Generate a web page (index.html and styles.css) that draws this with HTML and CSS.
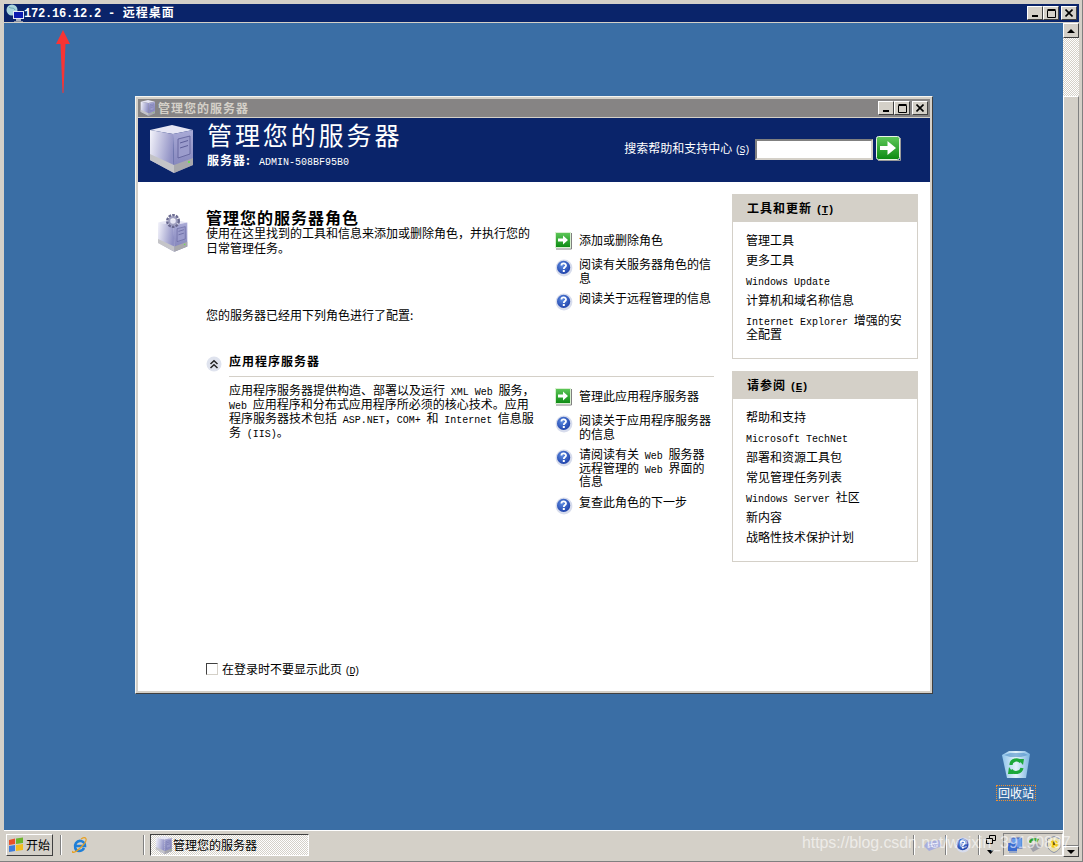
FILE: index.html
```html
<!DOCTYPE html>
<html lang="zh-CN">
<head>
  <meta charset="UTF-8" />
  <title>172.16.12.2 - 远程桌面</title>
  <link rel="stylesheet" href="styles.css">
</head>
<body>

  <svg class="defs" width="0" height="0">
    <defs>
      <linearGradient id="g-side" x1="0" y1="0" x2="1" y2="0.3"><stop offset="0" stop-color="#f4f4fb"/><stop offset="1" stop-color="#8f90c4"/></linearGradient>
      <linearGradient id="g-front" x1="0" y1="0" x2="0" y2="1"><stop offset="0" stop-color="#a9aad6"/><stop offset="1" stop-color="#7f80b8"/></linearGradient>
      <linearGradient id="g-green" x1="0" y1="0" x2="0" y2="1"><stop offset="0" stop-color="#5fc85a"/><stop offset="1" stop-color="#0b8a12"/></linearGradient>
      <radialGradient id="g-help" cx="0.4" cy="0.35" r="0.7"><stop offset="0" stop-color="#5b8ae0"/><stop offset="1" stop-color="#1d3fa8"/></radialGradient>
      <linearGradient id="g-bin" x1="0" y1="0" x2="1" y2="0"><stop offset="0" stop-color="#8fc4ea"/><stop offset="0.5" stop-color="#e4f3fb"/><stop offset="1" stop-color="#7ab4e0"/></linearGradient>

      <symbol id="i-server" viewBox="0 0 44 48">
        <polygon points="0,5 22,0 43,5 23,9" fill="#e6e6f4"/>
        <polygon points="0,5 23,9 24,48 0,35" fill="url(#g-side)"/>
        <polygon points="23,9 43,5 43,40 24,48" fill="url(#g-front)"/>
        <polygon points="0,29 24,40 24,48 0,35" fill="#c4c4c8"/>
        <polygon points="24,40 43,33 43,40 24,48" fill="#a8a8ac"/>
        <polygon points="28,14 40,11 40,29 28,33" fill="#9b9ccc" stroke="#5d5e98" stroke-width="0.8"/>
        <path d="M30 18 L38 15.5 M30 23 L38 20.5" stroke="#5d5e98" stroke-width="1"/>
        <rect x="38" y="36" width="2" height="2" fill="#6fdc5a"/>
      </symbol>

      <symbol id="i-go" viewBox="0 0 18 18">
        <rect x="0.5" y="0.5" width="15" height="15" fill="url(#g-green)" stroke="#d8f0d0"/>
        <path d="M16.5 1 V17 H1" fill="none" stroke="#808080"/>
        <path d="M3 6.5 H8 V3.5 L13 8 L8 12.5 V9.5 H3 Z" fill="#fff"/>
      </symbol>

      <symbol id="i-help" viewBox="0 0 18 18">
        <circle cx="9" cy="9" r="8.4" fill="#d7dcec"/>
        <circle cx="8.6" cy="8.4" r="6.6" fill="url(#g-help)"/>
        <path d="M6.4 6.6 C6.4 3.8 11 3.8 11 6.4 C11 8 8.8 8 8.8 10" fill="none" stroke="#fff" stroke-width="1.8"/>
        <rect x="7.8" y="11" width="2" height="2" fill="#fff"/>
      </symbol>
    </defs>
  </svg>

  <div class="rdp">
    <div class="rdp-title">
      <svg class="rdp-icon" width="18" height="18" viewBox="0 0 18 18">
        <circle cx="6" cy="6" r="5.5" fill="#a9d4dc"/>
        <path d="M3 3 C5 5 8 3 9 6" fill="none" stroke="#5f9fb0"/>
        <rect x="7" y="7" width="11" height="8" fill="#e4e8f4"/>
        <rect x="8" y="8" width="9" height="6" fill="#0c1cb0"/>
        <rect x="10" y="15" width="5" height="2" fill="#a8b0c0"/>
        <rect x="8" y="17" width="9" height="1" fill="#8890a0"/>
      </svg>
      <span class="rdp-caption"><span class="ip">172.16.12.2 -</span> 远程桌面</span>
      <div class="win-btns rdp-btns">
        <button class="win-btn"><svg width="8" height="8"><rect x="1" y="6" width="6" height="2"/></svg></button>
        <button class="win-btn"><svg width="9" height="9"><path d="M0.5 1.5 H8.5 V8.5 H0.5 Z M0.5 0.5 H8.5" fill="none" stroke="#000"/></svg></button>
        <button class="win-btn win-btn-close"><svg width="8" height="8"><path d="M0.5 0.5 L7.5 7.5 M7.5 0.5 L0.5 7.5" stroke="#000" stroke-width="1.6"/></svg></button>
      </div>
    </div>

    <div class="rdp-body">
      <div class="screen">
        <div class="desktop">

          <svg class="red-arrow" width="14" height="63" viewBox="0 0 14 63">
            <polygon points="7,0 14,14 9.5,14 7.5,63 6.5,63 4.5,14 0,14" fill="#f83434"/>
          </svg>

          <div class="window">
            <div class="win-title">
              <svg width="16" height="16"><use href="#i-server"/></svg>
              <span class="win-caption">管理您的服务器</span>
              <div class="win-btns">
                <button class="win-btn"><svg width="8" height="8"><rect x="1" y="6" width="6" height="2"/></svg></button>
                <button class="win-btn"><svg width="9" height="9"><path d="M0.5 1.5 H8.5 V8.5 H0.5 Z M0.5 0.5 H8.5" fill="none" stroke="#000"/></svg></button>
                <button class="win-btn win-btn-close"><svg width="8" height="8"><path d="M0.5 0.5 L7.5 7.5 M7.5 0.5 L0.5 7.5" stroke="#000" stroke-width="1.6"/></svg></button>
              </div>
            </div>

            <div class="banner">
              <svg class="banner-icon" width="44" height="48"><use href="#i-server"/></svg>
              <div class="banner-text">
                <h1>管理您的服务器</h1>
                <div class="banner-sub"><b>服务器:</b><span class="en host">ADMIN-508BF95B0</span></div>
              </div>
              <div class="search">
                <label>搜索帮助和支持中心 <span class="en key">(<u>S</u>)</span></label>
                <input class="search-input" type="text">
                <svg class="search-go" width="25" height="25" viewBox="0 0 25 25">
                  <rect x="0.5" y="0.5" width="23" height="23" rx="2" fill="url(#g-green)" stroke="#e8f4e4"/>
                  <path d="M24.5 2 V24.5 H2" fill="none" stroke="#9a9a9a"/>
                  <path d="M4 10 H11.5 V5 L20 12 L11.5 19 V14 H4 Z" fill="#fff"/>
                </svg>
              </div>
            </div>

            <div class="content">
              <div class="main">
                <div class="intro">
                  <svg class="intro-icon" width="32" height="40" viewBox="0 0 32 40">
                    <use href="#i-server" x="0" y="6" width="30" height="33"/>
                    <circle cx="15" cy="8" r="5.5" fill="none" stroke="#6a6a90" stroke-width="3" stroke-dasharray="2.5 1"/>
                    <circle cx="15" cy="8" r="3.8" fill="none" stroke="#a0a0c0" stroke-width="2"/>
                  </svg>
                  <div class="intro-text">
                    <h2>管理您的服务器角色</h2>
                    <p>使用在这里找到的工具和信息来添加或删除角色，并执行您的<br>日常管理任务。</p>
                    <p class="configured">您的服务器已经用下列角色进行了配置:</p>
                  </div>
                  <ul class="actions gap-top">
                    <li><svg width="18" height="18"><use href="#i-go"/></svg><span>添加或删除角色</span></li>
                    <li class="help"><svg width="18" height="18"><use href="#i-help"/></svg><span>阅读有关服务器角色的信<br>息</span></li>
                    <li class="help"><svg width="18" height="18"><use href="#i-help"/></svg><span>阅读关于远程管理的信息</span></li>
                  </ul>
                </div>

                <div class="role">
                  <div class="role-head">
                    <svg width="16" height="16" viewBox="0 0 16 16">
                      <circle cx="8" cy="8" r="7.5" fill="#dfe3ee"/>
                      <path d="M4.5 8 L8 4.8 L11.5 8 M4.5 12 L8 8.8 L11.5 12" fill="none" stroke="#222" stroke-width="1.5"/>
                    </svg>
                    <h3>应用程序服务器</h3>
                  </div>
                  <div class="role-body">
                    <p>应用程序服务器提供构造、部署以及运行 <span class="en">XML Web</span> 服务，<br><span class="en">Web</span> 应用程序和分布式应用程序所必须的核心技术。应用<br>程序服务器技术包括 <span class="en">ASP.NET</span>，<span class="en">COM+</span> 和 <span class="en">Internet</span> 信息服<br>务 <span class="en">(IIS)</span>。</p>
                    <ul class="actions">
                      <li><svg width="18" height="18"><use href="#i-go"/></svg><span>管理此应用程序服务器</span></li>
                      <li class="help"><svg width="18" height="18"><use href="#i-help"/></svg><span>阅读关于应用程序服务器<br>的信息</span></li>
                      <li class="help"><svg width="18" height="18"><use href="#i-help"/></svg><span>请阅读有关 <i class="en">Web</i> 服务器<br>远程管理的 <i class="en">Web</i> 界面的<br>信息</span></li>
                      <li class="help"><svg width="18" height="18"><use href="#i-help"/></svg><span>复查此角色的下一步</span></li>
                    </ul>
                  </div>
                </div>

                <label class="dont-show"><span class="checkbox"></span><span>在登录时不要显示此页 <span class="en key">(<u>D</u>)</span></span></label>
              </div>

              <div class="side">
                <div class="side-box">
                  <div class="side-head">工具和更新 <span class="en-b">(<u>T</u>)</span></div>
                  <ul>
                    <li>管理工具</li>
                    <li>更多工具</li>
                    <li><span class="en">Windows Update</span></li>
                    <li>计算机和域名称信息</li>
                    <li><span class="en">Internet Explorer</span> 增强的安<br>全配置</li>
                  </ul>
                </div>
                <div class="side-box">
                  <div class="side-head">请参阅 <span class="en-b">(<u>E</u>)</span></div>
                  <ul>
                    <li>帮助和支持</li>
                    <li><span class="en">Microsoft TechNet</span></li>
                    <li>部署和资源工具包</li>
                    <li>常见管理任务列表</li>
                    <li><span class="en">Windows Server</span> 社区</li>
                    <li>新内容</li>
                    <li>战略性技术保护计划</li>
                  </ul>
                </div>
              </div>
            </div>
          </div>

          <div class="recycle">
            <svg width="30" height="30" viewBox="0 0 30 30">
              <polygon points="1,5 8,1 24,1 29,4 25,28 6,28" fill="url(#g-bin)"/>
              <polygon points="3,5 9,3 23,3 27,5 20,7 9,7" fill="#4f8fc8" opacity="0.6"/>
              <path d="M10 15 C10 10 17 8 20 12 M21 18 C20 23 13 24 10 20" fill="none" stroke="#1ca83a" stroke-width="3.2"/>
              <polygon points="17,9 23,9 22,15" fill="#1ca83a"/>
              <polygon points="13,24 7,24 8,17" fill="#1ca83a"/>
            </svg>
            <span class="recycle-label">回收站</span>
          </div>
        </div>

        <div class="taskbar">
          <button class="start">
            <svg width="16" height="16" viewBox="0 0 16 16">
              <path d="M1 3 L7 1.5 V7 L1 8 Z" fill="#e8502a"/>
              <path d="M8 1.5 L15 0.5 V6 L8 7 Z" fill="#6cb52c"/>
              <path d="M1 9 L7 8 V14 L1 15 Z" fill="#3c7cdc"/>
              <path d="M8 8 L15 7 V13 L8 14 Z" fill="#f2bd1c"/>
            </svg>
            <span>开始</span>
          </button>
          <span class="sep sep-a"></span>
          <svg class="ie" width="17" height="18" viewBox="0 0 17 18">
            <path d="M4 10 H14 C14 5 8 3 5 7 C3 10 4 15 8 15 C10 15 12 14 13 12" fill="none" stroke="#1f7fd8" stroke-width="2.6"/>
            <path d="M2 15 C0 18 5 17 13 8 C17 3 15 0 10 3" fill="none" stroke="#e8a020" stroke-width="1.2"/>
          </svg>
          <span class="sep sep-b"></span>
          <button class="task"><svg width="18" height="18"><use href="#i-server"/></svg><span>管理您的服务器</span></button>

          <div class="tray-tools">
            <span class="sep"></span>
            <svg class="t-kbd" width="18" height="12" viewBox="0 0 18 12">
              <polygon points="3,3 15,1 18,7 5,12 0,7" fill="#a8aedc"/>
              <path d="M4 6 L14 4 M5 8 L15 6" stroke="#e8e8f8" stroke-dasharray="1.5 1"/>
            </svg>
            <span class="sep"></span>
            <svg class="t-help" width="16" height="16"><use href="#i-help"/></svg>
            <span class="sep"></span>
            <svg class="t-layout" width="10" height="20" viewBox="0 0 10 20">
              <path d="M3.5 0.5 H9.5 V5.5 H6.5 M0.5 3.5 H6.5 V8.5 H0.5 Z M3.5 0.5 V3" fill="none" stroke="#000"/>
              <polygon points="1,15 8,15 4.5,19" fill="#000"/>
            </svg>
          </div>
          <div class="tray">
            <svg width="15" height="16" viewBox="0 0 15 16">
              <rect x="3" y="1" width="11" height="10" fill="#6c9ce8" stroke="#3858b0"/>
              <rect x="0" y="6" width="9" height="8" fill="#3c6cd0"/>
              <rect x="1" y="14" width="8" height="2" fill="#98a8c8"/>
            </svg>
            <svg width="16" height="16" viewBox="0 0 16 16">
              <polygon points="2,9 11,6 15,10 6,15" fill="#a0a0a8"/>
              <path d="M3 6 C3 2 8 1 10 4" fill="none" stroke="#2ca02c" stroke-width="2.4"/>
              <polygon points="8,1 12,2 10,6" fill="#2ca02c"/>
            </svg>
            <svg width="14" height="17" viewBox="0 0 14 17">
              <path d="M7 0.5 L13.5 3 V9 C13.5 13 10 15.5 7 16.5 C4 15.5 0.5 13 0.5 9 V3 Z" fill="#e8e0b8" stroke="#8890a8"/>
              <circle cx="7" cy="8" r="3.8" fill="#f0c814"/>
              <rect x="6.2" y="5.5" width="1.6" height="3.5" fill="#604800"/>
            </svg>
          </div>

          <span class="watermark">https://blog.csdn.net/weixin_39190897</span>
        </div>
      </div>

      <div class="scrollbar">
        <div class="sb-btn"><span class="tri-up"></span></div>
        <div class="sb-track"></div>
        <div class="sb-thumb"></div>
        <div class="sb-btn sb-btn-down"><span class="tri-down"></span></div>
      </div>
    </div>
  </div>

</body>
</html>
```

FILE: styles.css
```css
* { box-sizing: border-box; }

html, body {
  margin: 0;
  height: 100%;
  overflow: hidden;
}

body {
  background-color: #d4d0c8;
  color: #000;
  font-family: "Noto Sans CJK SC", "Liberation Sans", sans-serif;
  font-size: 12px;
  line-height: 14px;
  word-spacing: 3px;
}

h1, h2, h3, p, ul { margin: 0; padding: 0; }
ul { list-style: none; }
i { font-style: normal; }
svg { display: block; flex: none; }
button { font: inherit; color: inherit; padding: 0; }

.defs { position: absolute; }

/* latin text of the bitmap font is 6px wide per char */
.en {
  font-family: "Liberation Mono", monospace;
  font-size: 10px;
  line-height: 0;
  word-spacing: 0;
}

.en.key { letter-spacing: -1.3px; }

.en-b {
  font-family: "Liberation Mono", monospace;
  font-size: 11px;
  line-height: 0;
  font-weight: bold;
  letter-spacing: -0.6px;
}

/* remote desktop frame */
.rdp {
  width: 1083px;
  height: 862px;
  padding: 4px 3px 4px 4px;
  display: flex;
  flex-direction: column;
  border-bottom: 1px solid #808080;
  border-right: 1px solid #808080;
}

.rdp-title {
  height: 18px;
  flex: none;
  display: flex;
  align-items: center;
  background-color: #0a246a;
  color: #fff;
  padding-left: 2px;
}

.rdp-caption {
  font-weight: bold;
  letter-spacing: 1px;
  word-spacing: 0;
}

.ip {
  font-family: "Liberation Mono", monospace;
  letter-spacing: -0.2px;
  margin-right: 4px;
}

.win-btns {
  margin-left: auto;
  display: flex;
  padding-right: 2px;
}

.win-btn {
  width: 16px;
  height: 14px;
  display: flex;
  align-items: center;
  justify-content: center;
  background-color: #d4d0c8;
  border: 1px solid;
  border-color: #fff #404040 #404040 #fff;
}

.win-btn-close { margin-left: 2px; }

.rdp-body {
  flex: 1;
  min-height: 0;
  margin-top: 1px;
  display: flex;
}

.screen {
  flex: 1;
  display: flex;
  flex-direction: column;
}

.desktop {
  position: relative;
  flex: 1;
  background-color: #3a6ea5;
}

.red-arrow {
  position: absolute;
  left: 52px;
  top: 7px;
}

/* server manager window */
.window {
  position: absolute;
  left: 131px;
  top: 73px;
  width: 798px;
  height: 598px;
  display: flex;
  flex-direction: column;
  padding: 2px;
  background-color: #d4d0c8;
  border: 1px solid;
  border-color: #f4f4f0 #404040 #404040 #f4f4f0;
}

.win-title {
  height: 18px;
  flex: none;
  display: flex;
  align-items: center;
  gap: 2px;
  padding-left: 2px;
  background-color: #868484;
  color: #d4d0c8;
  font-weight: bold;
}

.win-caption { letter-spacing: 1px; }

.banner {
  height: 64px;
  flex: none;
  margin-top: 1px;
  display: flex;
  background-color: #0a246a;
  color: #fff;
}

.banner-icon { margin: 7px 0 0 12px; }

.banner-text {
  margin-left: 13px;
  padding-top: 1px;
}

.banner h1 {
  font-size: 25px;
  line-height: 31px;
  font-weight: normal;
  letter-spacing: 2.9px;
}

.banner-sub { line-height: 15px; margin-top: 2px; }
.banner-sub b { letter-spacing: 1px; }
.host { margin-left: 8px; }

.search {
  margin-left: auto;
  padding: 18px 29px 0 0;
  display: flex;
  align-items: flex-start;
}

.search label { margin-top: 5px; word-spacing: 0; }

.search-input {
  width: 118px;
  height: 21px;
  margin: 3px 3px 0 6px;
  padding: 0;
  background-color: #fff;
  border: 2px solid;
  border-color: #808080 #d4d0c8 #d4d0c8 #808080;
}

.content {
  flex: 1;
  min-height: 0;
  display: flex;
  background-color: #fff;
}

.main {
  width: 594px;
  padding: 27px 0 15px 20px;
  display: flex;
  flex-direction: column;
}

.intro {
  display: grid;
  grid-template-columns: 48px 349px 159px;
}

.intro-icon { margin-top: 4px; }

.intro h2 {
  font-size: 16px;
  line-height: 16px;
  font-weight: bold;
  letter-spacing: 1px;
}

.intro-text p { line-height: 15px; }
.intro-text .configured { margin-top: 52px; }

.actions li {
  display: flex;
  gap: 6px;
  padding-bottom: 7px;
  line-height: 13.5px;
}

.actions li > span { display: block; padding-top: 1px; }
.actions li.help svg { margin-top: 2px; }
.actions li.help > span { padding-top: 0; }
.gap-top { margin-top: 23px; }

.role { margin: 31px 18px 0 48px; }

.role-head {
  display: flex;
  align-items: flex-start;
  gap: 7px;
}

.role-head svg { margin-top: 3px; }

.role-head h3 {
  flex: 1;
  font-size: 12px;
  line-height: 15px;
  font-weight: bold;
  letter-spacing: 1px;
  padding-bottom: 8px;
  border-bottom: 1px solid #d4d0c8;
}

.role-body {
  display: grid;
  grid-template-columns: 326px 159px;
  margin-left: 23px;
  padding-top: 11px;
}

.role-body p { margin-top: -5px; line-height: 14px; }

.dont-show {
  margin-top: auto;
  margin-left: 48px;
  display: flex;
  align-items: center;
  gap: 4px;
  word-spacing: 0;
}

.checkbox {
  width: 12px;
  height: 12px;
  background-color: #fff;
  border: 1px solid;
  border-color: #404040 #d4d0c8 #d4d0c8 #404040;
}

.side {
  width: 186px;
  padding-top: 12px;
  display: flex;
  flex-direction: column;
  gap: 12px;
}

.side-box { border: 1px solid #d4d0c8; }

.side-head {
  height: 28px;
  margin: -1px -1px 0;
  padding: 7px 0 0 15px;
  background-color: #d4d0c8;
  font-weight: bold;
  letter-spacing: 1px;
  word-spacing: 0;
}

.side-box ul { padding: 8px 0 14px 13px; }
.side-box li { padding: 3px 0; line-height: 14px; }

/* desktop icon */
.recycle {
  position: absolute;
  left: 993px;
  top: 727px;
  width: 38px;
  display: flex;
  flex-direction: column;
  align-items: center;
  gap: 5px;
  color: #fff;
}

.recycle-label {
  padding: 0 1px;
  border: 1px dotted #f09030;
  white-space: nowrap;
}

/* taskbar */
.taskbar {
  position: relative;
  height: 27px;
  flex: none;
  padding-top: 1px;
  display: flex;
  align-items: center;
  background-color: #d4d0c8;
  border-top: 1px solid #fff;
}

.start {
  width: 47px;
  height: 22px;
  margin-left: 2px;
  display: flex;
  align-items: center;
  gap: 2px;
  padding-left: 1px;
  background-color: #d4d0c8;
  border: 1px solid;
  border-color: #fff #404040 #404040 #fff;
}

.sep {
  width: 2px;
  height: 20px;
  border-left: 1px solid #808080;
  border-right: 1px solid #fff;
  flex: none;
}

.sep-a { margin-left: 7px; }
.ie { margin-left: 9px; }
.sep-b { margin-left: 55px; }

.task {
  width: 159px;
  height: 22px;
  margin-left: 5px;
  display: flex;
  align-items: center;
  padding-left: 4px;
  border: 1px solid;
  border-color: #404040 #fff #fff #404040;
  background: repeating-conic-gradient(#fff 0 25%, #d4d0c8 0 50%) 0 0 / 2px 2px;
}

.tray-tools {
  margin-left: auto;
  display: flex;
  align-items: center;
}

.t-kbd { margin: 0 3px 0 9px; }
.t-help { margin: 0 7px 0 8px; }
.t-layout { margin: 0 7px 0 6px; }

.tray {
  width: 60px;
  height: 23px;
  display: flex;
  align-items: center;
  gap: 4px;
  padding-left: 4px;
  border: 1px solid;
  border-color: #808080 #fff #fff #808080;
}

.watermark {
  position: absolute;
  left: 798px;
  top: 3px;
  font-family: "Liberation Sans", sans-serif;
  font-size: 16px;
  line-height: 18px;
  letter-spacing: -0.1px;
  word-spacing: 0;
  color: rgba(255, 255, 255, 0.6);
  white-space: nowrap;
  z-index: 2;
}

/* scrollbar of the remote session */
.scrollbar {
  width: 16px;
  flex: none;
  display: flex;
  flex-direction: column;
}

.sb-btn {
  height: 15px;
  flex: none;
  display: flex;
  align-items: center;
  justify-content: center;
  background-color: #d4d0c8;
  border: 1px solid;
  border-color: #fff #404040 #404040 #fff;
}

.sb-btn-down { height: 11px; }

.sb-track {
  height: 58px;
  flex: none;
  background: repeating-conic-gradient(#fff 0 25%, #d4d0c8 0 50%) 0 0 / 2px 2px;
}

.sb-thumb {
  flex: 1;
  background-color: #d4d0c8;
  border: 1px solid;
  border-color: #fff #808080 #808080 #fff;
}

.tri-up, .tri-down {
  width: 0;
  height: 0;
  border-left: 4px solid transparent;
  border-right: 4px solid transparent;
}

.tri-up { border-bottom: 4px solid #000; }
.tri-down { border-top: 4px solid #000; }
```
